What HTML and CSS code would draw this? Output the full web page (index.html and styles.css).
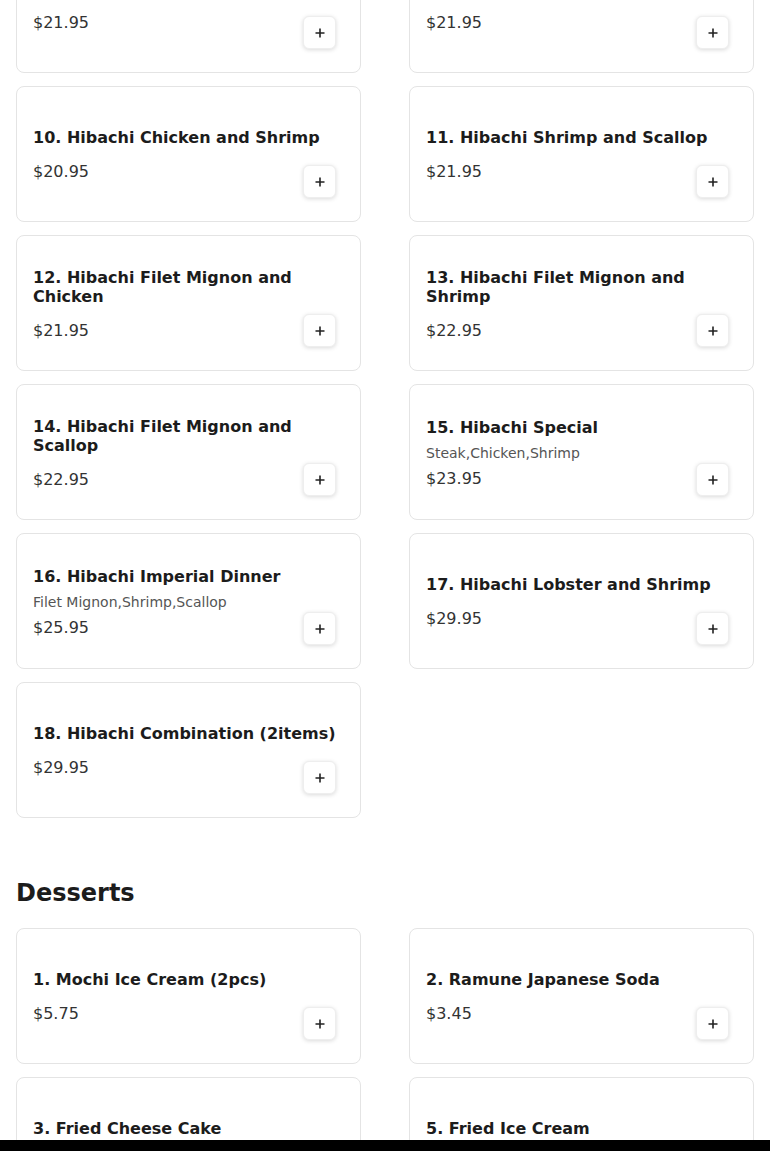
FILE: index.html
```html
<!DOCTYPE html>
<html lang="en">
<head>
    <meta charset="UTF-8">
    <meta name="viewport" content="width=device-width, initial-scale=1.0">
    <title>Menu</title>
    <link rel="stylesheet" href="styles.css">
</head>
<body>
    <div class="menu">
        <section class="category">
            <div class="items">
                <div class="item">
                    <div class="info">
                        <h3 class="name">8. Hibachi Steak and Shrimp</h3>
                        <div class="price">$21.95</div>
                    </div>
                    <button class="add"><svg width="12" height="12" viewBox="0 0 12 12"><path d="M6 1.5v9M1.5 6h9" stroke="#222" stroke-width="1.6"/></svg></button>
                </div>
                <div class="item">
                    <div class="info">
                        <h3 class="name">9. Hibachi Steak and Scallop</h3>
                        <div class="price">$21.95</div>
                    </div>
                    <button class="add"><svg width="12" height="12" viewBox="0 0 12 12"><path d="M6 1.5v9M1.5 6h9" stroke="#222" stroke-width="1.6"/></svg></button>
                </div>
                <div class="item">
                    <div class="info">
                        <h3 class="name">10. Hibachi Chicken and Shrimp</h3>
                        <div class="price">$20.95</div>
                    </div>
                    <button class="add"><svg width="12" height="12" viewBox="0 0 12 12"><path d="M6 1.5v9M1.5 6h9" stroke="#222" stroke-width="1.6"/></svg></button>
                </div>
                <div class="item">
                    <div class="info">
                        <h3 class="name">11. Hibachi Shrimp and Scallop</h3>
                        <div class="price">$21.95</div>
                    </div>
                    <button class="add"><svg width="12" height="12" viewBox="0 0 12 12"><path d="M6 1.5v9M1.5 6h9" stroke="#222" stroke-width="1.6"/></svg></button>
                </div>
                <div class="item">
                    <div class="info">
                        <h3 class="name">12. Hibachi Filet Mignon and Chicken</h3>
                        <div class="price">$21.95</div>
                    </div>
                    <button class="add"><svg width="12" height="12" viewBox="0 0 12 12"><path d="M6 1.5v9M1.5 6h9" stroke="#222" stroke-width="1.6"/></svg></button>
                </div>
                <div class="item">
                    <div class="info">
                        <h3 class="name">13. Hibachi Filet Mignon and Shrimp</h3>
                        <div class="price">$22.95</div>
                    </div>
                    <button class="add"><svg width="12" height="12" viewBox="0 0 12 12"><path d="M6 1.5v9M1.5 6h9" stroke="#222" stroke-width="1.6"/></svg></button>
                </div>
                <div class="item">
                    <div class="info">
                        <h3 class="name">14. Hibachi Filet Mignon and Scallop</h3>
                        <div class="price">$22.95</div>
                    </div>
                    <button class="add"><svg width="12" height="12" viewBox="0 0 12 12"><path d="M6 1.5v9M1.5 6h9" stroke="#222" stroke-width="1.6"/></svg></button>
                </div>
                <div class="item">
                    <div class="info">
                        <h3 class="name">15. Hibachi Special</h3>
                        <p class="desc">Steak,Chicken,Shrimp</p>
                        <div class="price">$23.95</div>
                    </div>
                    <button class="add"><svg width="12" height="12" viewBox="0 0 12 12"><path d="M6 1.5v9M1.5 6h9" stroke="#222" stroke-width="1.6"/></svg></button>
                </div>
                <div class="item">
                    <div class="info">
                        <h3 class="name">16. Hibachi Imperial Dinner</h3>
                        <p class="desc">Filet Mignon,Shrimp,Scallop</p>
                        <div class="price">$25.95</div>
                    </div>
                    <button class="add"><svg width="12" height="12" viewBox="0 0 12 12"><path d="M6 1.5v9M1.5 6h9" stroke="#222" stroke-width="1.6"/></svg></button>
                </div>
                <div class="item">
                    <div class="info">
                        <h3 class="name">17. Hibachi Lobster and Shrimp</h3>
                        <div class="price">$29.95</div>
                    </div>
                    <button class="add"><svg width="12" height="12" viewBox="0 0 12 12"><path d="M6 1.5v9M1.5 6h9" stroke="#222" stroke-width="1.6"/></svg></button>
                </div>
                <div class="item">
                    <div class="info">
                        <h3 class="name">18. Hibachi Combination (2items)</h3>
                        <div class="price">$29.95</div>
                    </div>
                    <button class="add"><svg width="12" height="12" viewBox="0 0 12 12"><path d="M6 1.5v9M1.5 6h9" stroke="#222" stroke-width="1.6"/></svg></button>
                </div>
            </div>
        </section>

        <section class="category">
            <h2 class="category-title">Desserts</h2>
            <div class="items">
                <div class="item">
                    <div class="info">
                        <h3 class="name">1. Mochi Ice Cream (2pcs)</h3>
                        <div class="price">$5.75</div>
                    </div>
                    <button class="add"><svg width="12" height="12" viewBox="0 0 12 12"><path d="M6 1.5v9M1.5 6h9" stroke="#222" stroke-width="1.6"/></svg></button>
                </div>
                <div class="item">
                    <div class="info">
                        <h3 class="name">2. Ramune Japanese Soda</h3>
                        <div class="price">$3.45</div>
                    </div>
                    <button class="add"><svg width="12" height="12" viewBox="0 0 12 12"><path d="M6 1.5v9M1.5 6h9" stroke="#222" stroke-width="1.6"/></svg></button>
                </div>
                <div class="item">
                    <div class="info">
                        <h3 class="name">3. Fried Cheese Cake</h3>
                        <div class="price">$6.95</div>
                    </div>
                    <button class="add"><svg width="12" height="12" viewBox="0 0 12 12"><path d="M6 1.5v9M1.5 6h9" stroke="#222" stroke-width="1.6"/></svg></button>
                </div>
                <div class="item">
                    <div class="info">
                        <h3 class="name">5. Fried Ice Cream</h3>
                        <div class="price">$6.95</div>
                    </div>
                    <button class="add"><svg width="12" height="12" viewBox="0 0 12 12"><path d="M6 1.5v9M1.5 6h9" stroke="#222" stroke-width="1.6"/></svg></button>
                </div>
            </div>
        </section>
    </div>

    <div class="cart-bar"></div>
</body>
</html>
```

FILE: styles.css
```css
body {
    margin: 0;
    background-color: #fff;
    font-family: "DejaVu Sans", sans-serif;
    color: #1c1c1c;
}

.menu {
    padding: 0 16px;
    margin-top: -63px; /* page is scrolled into the hibachi list */
}

.category-title {
    font-size: 24px;
    line-height: 28px;
    font-weight: bold;
    margin: 61px 0 21px;
    color: #1c1c1c;
}

.items {
    display: grid;
    grid-template-columns: 1fr 1fr;
    column-gap: 48px;
    row-gap: 13px;
}

.item {
    position: relative;
    box-sizing: border-box;
    height: 136px;
    padding: 0 16px;
    border: 1px solid #e4e4e4;
    border-radius: 8px;
    background-color: #fff;
    display: flex;
    align-items: center;
}

.info {
    width: 100%;
    display: flex;
    flex-direction: column;
    padding-top: 1px;
}

.name {
    font-size: 16px;
    line-height: 19px;
    font-weight: bold;
    margin: 0 0 8px;
    color: #1c1c1c;
}

.desc {
    font-size: 14px;
    line-height: 17px;
    margin: 0;
    color: #555;
}

.price {
    font-size: 16px;
    line-height: 19px;
    margin-top: 7px;
    color: #333;
}

.add {
    position: absolute;
    right: 24px;
    bottom: 23px;
    width: 33px;
    height: 33px;
    padding: 0;
    border: 1px solid #eee;
    border-radius: 6px;
    background-color: #fff;
    box-shadow: 0 1px 4px rgba(0, 0, 0, 0.15);
    display: flex;
    align-items: center;
    justify-content: center;
}

.cart-bar {
    position: fixed;
    left: 0;
    right: 0;
    bottom: 0;
    height: 11px;
    background-color: #000;
}
```
